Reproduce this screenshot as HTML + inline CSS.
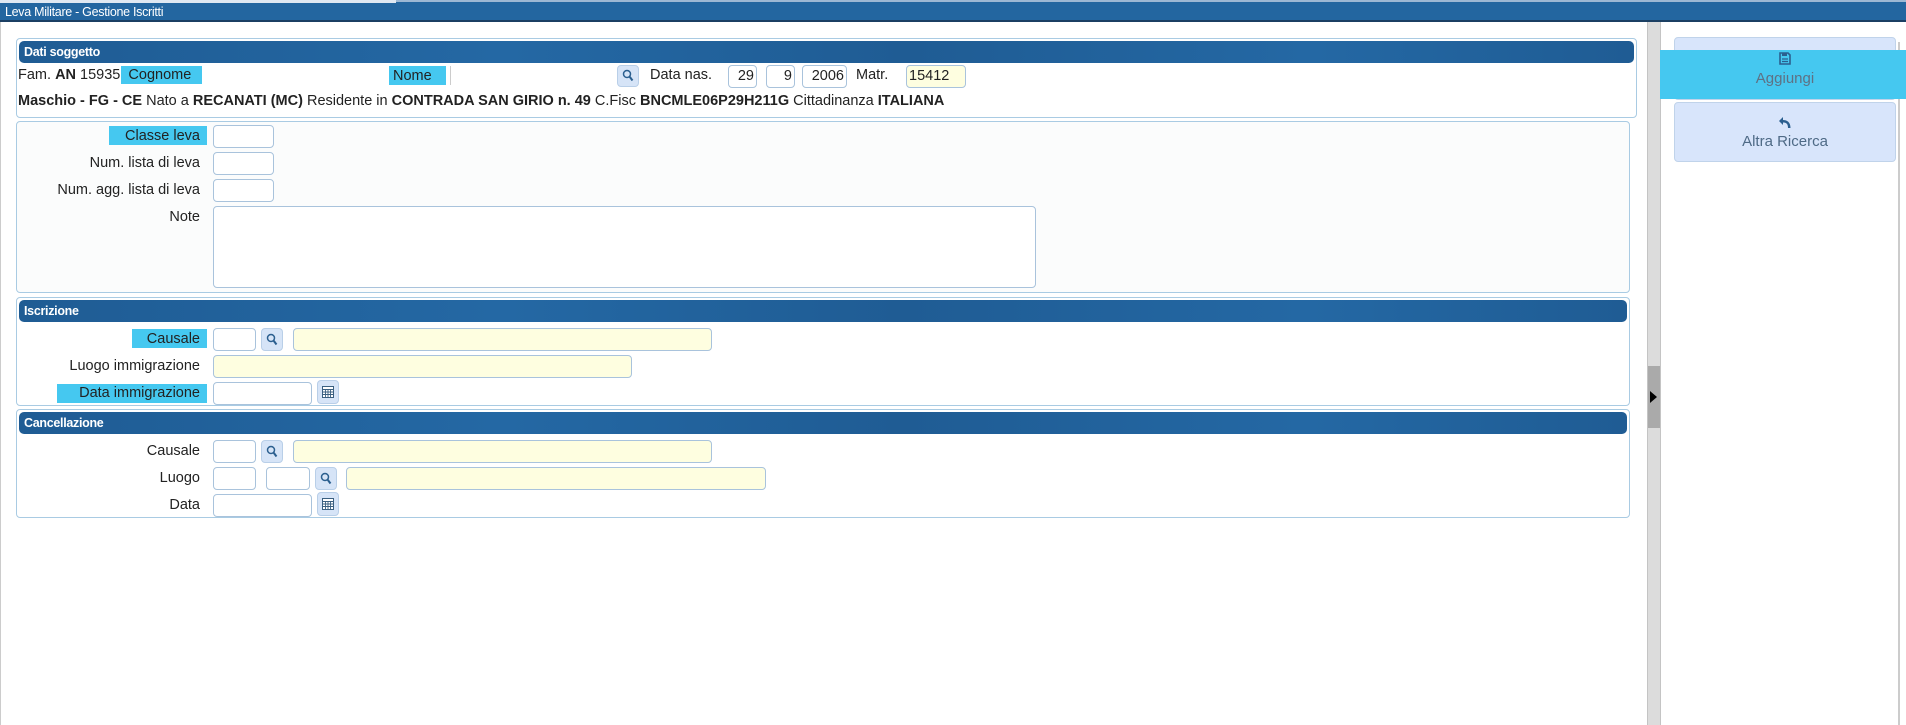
<!DOCTYPE html>
<html><head><meta charset="utf-8"><style>
*{box-sizing:border-box;margin:0;padding:0}
body{width:1906px;height:725px;overflow:hidden;background:#fff;font-family:"Liberation Sans",sans-serif;font-size:14.5px;color:#222;position:relative}
.a{position:absolute}
.hdr{position:absolute;left:2px;right:2px;height:22px;border-radius:5px;background:linear-gradient(90deg,#1f5c94,#2468a4 30%,#1f5c94 55%,#2468a4 80%,#1f5c94);color:#fff;font-weight:bold;font-size:12.5px;line-height:22px;padding-left:5px;letter-spacing:-0.3px}
.panel{position:absolute;border:1px solid #a9cbe3;border-radius:4px}
.inp{position:absolute;height:23px;border:1px solid #a9c3dc;border-radius:4px;background:#fff;font-size:14.5px;line-height:21px;text-align:right;padding-right:2px}
.y{background:#fefee0}
.btn{position:absolute;height:23px;width:22px;border:1px solid #b9cfe8;border-radius:4px;background:#d6e4f7}
.lbl{position:absolute;right:1706px;text-align:right;white-space:nowrap;line-height:23px}
.cy{background:#45c8f0}
b{font-weight:bold}
</style></head><body>
<div class="a" style="left:0;top:0;width:1906px;height:22px;background:#2366a0;border-bottom:2px solid #1b3f63"></div>
<div class="a" style="left:0;top:0;width:396px;height:3px;background:#dfe8f2"></div>
<div class="a" style="left:396px;top:0;width:1510px;height:2px;background:#9cb8d4"></div>
<div class="a" style="left:5px;top:3px;color:#fff;font-size:12.5px;line-height:18px;letter-spacing:-0.3px">Leva Militare - Gestione Iscritti</div>
<div class="a" style="left:0;top:22px;width:1px;height:703px;background:#ccc"></div>

<div class="a" style="left:1647px;top:22px;width:14px;height:703px;background:#dcdcdc;border-left:1px solid #c4c4c4;border-right:1px solid #c4c4c4"></div>
<div class="a" style="left:1648px;top:366px;width:12px;height:62px;background:#aaa"></div>
<div class="a" style="left:1650px;top:391px;width:0;height:0;border-top:6px solid transparent;border-bottom:6px solid transparent;border-left:7px solid #000"></div>
<div class="a" style="left:1898px;top:42px;width:2px;height:683px;background:#ccc"></div>

<div class="a" style="left:1674px;top:37px;width:222px;height:63px;background:#d8e5fb;border:1px solid #c0d3ea;border-radius:4px"></div>
<div class="a cy" style="left:1660px;top:50px;width:246px;height:49px"></div>
<svg class="a" style="left:1779px;top:52px" width="12" height="13" viewBox="0 0 12 13"><path d="M1 1h8l2 2v9H1z" fill="none" stroke="#2b5f8f" stroke-width="1.6"/><rect x="3" y="1" width="5" height="3" fill="#2b5f8f"/><path d="M3 7h6M3 9.5h6" stroke="#2b5f8f" stroke-width="1.3"/></svg>
<div class="a" style="left:1674px;top:70px;width:222px;text-align:center;color:#5e7184;font-size:15px">Aggiungi</div>
<div class="a" style="left:1674px;top:102px;width:222px;height:60px;background:#d8e5fb;border:1px solid #c0d3ea;border-radius:4px"></div>
<svg class="a" style="left:1779px;top:116px" width="12" height="13" viewBox="0 0 12 13"><path d="M4 1L0 5l4 4V6.5c3 0 5 1 5 5.5h2.5C11.5 6 8 4 4 4z" fill="#2b5f8f"/></svg>
<div class="a" style="left:1674px;top:133px;width:222px;text-align:center;color:#4e6a86;font-size:15px">Altra Ricerca</div>

<div class="panel" style="left:16px;top:38px;width:1621px;height:80px"><div class="hdr" style="top:2px">Dati soggetto</div></div>
<div class="a cy" style="left:121px;top:66px;width:81px;height:18px"></div>
<div class="a" style="left:18px;top:66px;line-height:18px;white-space:nowrap">Fam. <b>AN</b> 15935 &nbsp;Cognome</div>
<div class="a cy" style="left:389px;top:66px;width:57px;height:19px"></div>
<div class="a" style="left:393px;top:67px;line-height:18px">Nome</div>
<div class="a" style="left:450px;top:66px;width:1px;height:19px;background:#ccc"></div>
<div class="btn" style="left:617px;top:65px;height:22px"></div>
<svg class="a" style="left:622px;top:69px" width="12" height="13" viewBox="0 0 12 13"><circle cx="5" cy="5" r="3.5" fill="none" stroke="#2b5f8f" stroke-width="1.5"/><path d="M7.5 7.5l3 4" stroke="#2b5f8f" stroke-width="2"/></svg>
<div class="a" style="left:650px;top:66px;line-height:18px">Data nas.</div>
<div class="inp" style="left:728px;top:65px;width:29px">29</div>
<div class="inp" style="left:766px;top:65px;width:29px">9</div>
<div class="inp" style="left:802px;top:65px;width:45px">2006</div>
<div class="a" style="left:856px;top:66px;line-height:18px">Matr.</div>
<div class="inp y" style="left:906px;top:65px;width:60px;text-align:left;padding-left:2px">15412</div>
<div class="a" style="left:18px;top:92px;line-height:18px;white-space:nowrap"><b>Maschio - FG - CE</b> Nato a <b>RECANATI (MC)</b> Residente in <b>CONTRADA SAN GIRIO n. 49</b> C.Fisc <b>BNCMLE06P29H211G</b> Cittadinanza <b>ITALIANA</b></div>

<div class="panel" style="left:16px;top:121px;width:1614px;height:172px;background:#fbfcfc"></div>
<div class="a cy" style="left:109px;top:126px;width:98px;height:19px"></div>
<div class="lbl" style="top:125px">Classe leva</div>
<div class="inp" style="left:213px;top:125px;width:61px"></div>
<div class="lbl" style="top:152px">Num. lista di leva</div>
<div class="inp" style="left:213px;top:152px;width:61px"></div>
<div class="lbl" style="top:179px">Num. agg. lista di leva</div>
<div class="inp" style="left:213px;top:179px;width:61px"></div>
<div class="lbl" style="top:206px">Note</div>
<div class="inp" style="left:213px;top:206px;width:823px;height:82px"></div>

<div class="panel" style="left:16px;top:297px;width:1614px;height:109px"><div class="hdr" style="top:2px">Iscrizione</div></div>
<div class="a cy" style="left:132px;top:329px;width:75px;height:19px"></div>
<div class="lbl" style="top:328px">Causale</div>
<div class="inp" style="left:213px;top:328px;width:43px"></div>
<div class="btn" style="left:261px;top:328px"></div>
<svg class="a" style="left:266px;top:333px" width="12" height="13" viewBox="0 0 12 13"><circle cx="5" cy="5" r="3.5" fill="none" stroke="#2b5f8f" stroke-width="1.5"/><path d="M7.5 7.5l3 4" stroke="#2b5f8f" stroke-width="2"/></svg>
<div class="inp y" style="left:293px;top:328px;width:419px"></div>
<div class="lbl" style="top:355px">Luogo immigrazione</div>
<div class="inp y" style="left:213px;top:355px;width:419px"></div>
<div class="a cy" style="left:57px;top:384px;width:150px;height:19px"></div>
<div class="lbl" style="top:382px">Data immigrazione</div>
<div class="inp" style="left:213px;top:382px;width:99px"></div>
<div class="btn" style="left:317px;top:380px;height:24px"></div>
<svg class="a" style="left:322px;top:386px" width="12" height="12" viewBox="0 0 12 12"><rect x="0.5" y="0.5" width="11" height="11" fill="#fff" stroke="#3a5f80"/><path d="M1 3.5h10M1 6h10M1 8.5h10M3.5 3v9M6 3v9M8.5 3v9" stroke="#3a5f80" stroke-width="0.9"/></svg>

<div class="panel" style="left:16px;top:409px;width:1614px;height:109px"><div class="hdr" style="top:2px">Cancellazione</div></div>
<div class="lbl" style="top:440px">Causale</div>
<div class="inp" style="left:213px;top:440px;width:43px"></div>
<div class="btn" style="left:261px;top:440px"></div>
<svg class="a" style="left:266px;top:445px" width="12" height="13" viewBox="0 0 12 13"><circle cx="5" cy="5" r="3.5" fill="none" stroke="#2b5f8f" stroke-width="1.5"/><path d="M7.5 7.5l3 4" stroke="#2b5f8f" stroke-width="2"/></svg>
<div class="inp y" style="left:293px;top:440px;width:419px"></div>
<div class="lbl" style="top:467px">Luogo</div>
<div class="inp" style="left:213px;top:467px;width:43px"></div>
<div class="inp" style="left:266px;top:467px;width:44px"></div>
<div class="btn" style="left:315px;top:467px"></div>
<svg class="a" style="left:320px;top:472px" width="12" height="13" viewBox="0 0 12 13"><circle cx="5" cy="5" r="3.5" fill="none" stroke="#2b5f8f" stroke-width="1.5"/><path d="M7.5 7.5l3 4" stroke="#2b5f8f" stroke-width="2"/></svg>
<div class="inp y" style="left:346px;top:467px;width:420px"></div>
<div class="lbl" style="top:494px">Data</div>
<div class="inp" style="left:213px;top:494px;width:99px"></div>
<div class="btn" style="left:317px;top:492px;height:24px"></div>
<svg class="a" style="left:322px;top:498px" width="12" height="12" viewBox="0 0 12 12"><rect x="0.5" y="0.5" width="11" height="11" fill="#fff" stroke="#3a5f80"/><path d="M1 3.5h10M1 6h10M1 8.5h10M3.5 3v9M6 3v9M8.5 3v9" stroke="#3a5f80" stroke-width="0.9"/></svg>
</body></html>
